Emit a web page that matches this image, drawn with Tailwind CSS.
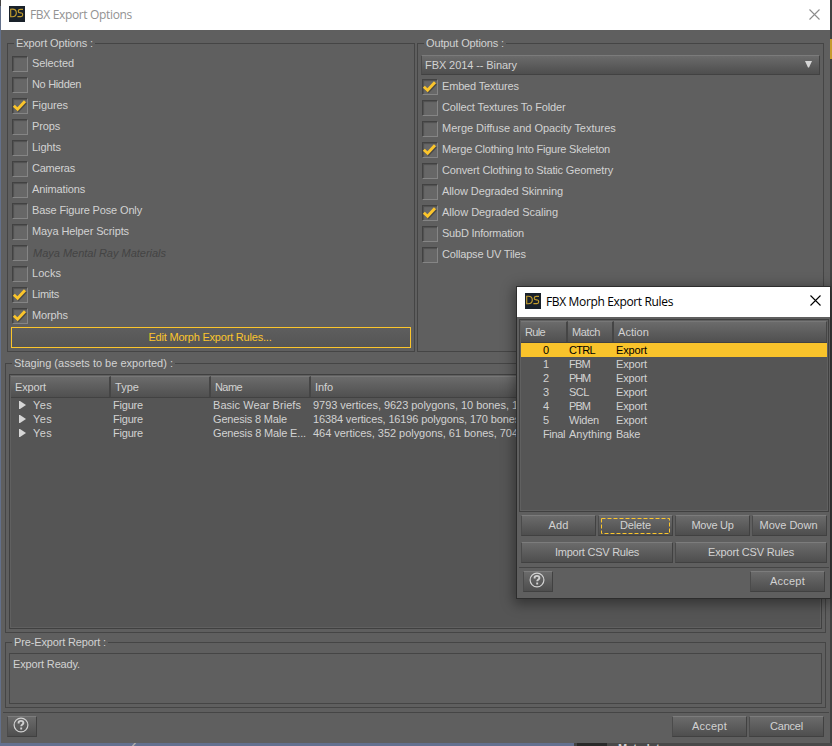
<!DOCTYPE html>
<html lang="en">
<head>
<meta charset="utf-8">
<title>FBX Export Options</title>
<script src="https://cdn.jsdelivr.net/npm/@tailwindcss/browser@4"></script>
</head>
<body class="relative h-[746px] w-[832px] overflow-hidden bg-[#414141] font-['Liberation_Sans',Arial,sans-serif] text-[11px] leading-[14px] text-[#d2d2d2]">
<svg width="0" height="0" class="absolute">
  <defs>
    <symbol id="check" viewBox="0 0 16 16"><path d="M3 9l3.6 3.4L14 4.6" fill="none" stroke="#333" stroke-opacity=".6" stroke-width="2.6"/><path d="M1.8 7.8l3.8 3.5L13 3.2" fill="none" stroke="#fbc52c" stroke-width="2.9"/></symbol>
    <symbol id="help" viewBox="0 0 16 16"><circle cx="8" cy="8" r="6.9" fill="none" stroke="#d2d2d2" stroke-width="1.2"/><path d="M5.6 6.5V5.8c0-1.2 1-1.9 2.4-1.9s2.4.8 2.4 2c0 1.5-2.2 1.6-2.2 3.3M8.2 10.6v1.8" fill="none" stroke="#d2d2d2" stroke-width="1.9"/></symbol>
    <symbol id="logo" viewBox="0 0 16 16"><rect width="16" height="16" fill="#19212a"/><path d="M1.7 3.2v7.5h1.6c2.6 0 4-1.5 4-3.7s-1.4-3.8-4-3.8zM14 3.3h-2.6c-2.8 0-2.8 3.2-.5 3.5h1c2.5.2 2.4 3.8 0 3.8H8.4" fill="none" stroke="#c29d2e" stroke-width="1.15"/></symbol>
    <symbol id="close" viewBox="0 0 11 11"><path d="M.5.5l10 10M10.5.5l-10 10" fill="none" stroke="currentColor" stroke-width="1.1"/></symbol>
  </defs>
</svg>

<!-- Desktop edges behind the window -->
<div class="absolute left-0 top-0 h-[746px] w-px bg-[#63708a]"></div>
<div class="absolute left-0 top-0 h-[6px] w-px bg-[#444]"></div>
<div class="absolute left-[830px] top-[39px] h-5 w-[2px] bg-[#c69a2e]"></div>
<div class="absolute left-0 top-[743px] flex h-[3px] w-[832px]">
  <div class="relative w-[574px] overflow-hidden bg-[#63708f]"><div class="absolute left-[133px] top-0 h-[3px] w-[2px] skew-x-[-40deg] bg-[#aaa]"></div></div>
  <div class="w-[3px] bg-[#444]"></div><div class="w-[30px] bg-[#2a2a2a]"></div>
  <div class="h-[3px] grow overflow-hidden bg-[#494949] pl-[11px] text-[11px] font-bold leading-[11px]">Metadata</div>
</div>

<main class="absolute left-px top-0 flex h-[743px] w-[829px] flex-col bg-[#5f5f5f]">
  <header class="flex h-[30px] shrink-0 items-center bg-white pl-2 pr-[10px] font-['Open_Sans',sans-serif] text-[12px] text-[#929292]">
    <svg class="mr-[5px] mb-[2px] h-4 w-4"><use href="#logo"/></svg>
    <h1 class="grow" data-w="102" data-font="12px 'Open Sans'">FBX Export Options</h1>
    <svg class="mb-px h-[11px] w-[11px] text-[#8c8c8c]"><use href="#close"/></svg>
  </header>

  <div class="flex gap-[2px] pl-[6px] pt-[13px]">
    <section class="relative h-[309px] w-[408px] border border-[#454545] px-[3px] pt-[9px]">
      <h2 class="absolute left-[6px] top-[-8px] bg-[#5f5f5f] px-[2px]" data-w="77">Export Options :</h2>
      <div id="exportList"></div>
      <button class="mt-[1px] block h-[21px] w-[400px] border border-[#fbc52c] bg-linear-to-b from-[#5e5e5e] to-[#555] pb-[2px] pr-[2px] text-[#fbc52c]"><span data-w="123">Edit Morph Export Rules...</span></button>
    </section>
    <section class="relative h-[309px] w-[407px] border border-[#454545] pl-[3px] pt-[11px]">
      <h2 class="absolute left-[6px] top-[-8px] bg-[#5f5f5f] px-[2px]" data-w="78">Output Options :</h2>
      <div class="mb-px flex h-5 w-[399px] items-center justify-between border border-[#424242] border-t-[#7b7b7b] border-l-[#4a4a4a] bg-linear-to-b from-[#6b6b6b] to-[#4e4e4e] pb-px pl-[3px] pr-[7px]">
        <span data-w="92">FBX 2014 -- Binary</span>
        <svg class="h-[7px] w-[7px]" viewBox="0 0 7 7"><path d="M0 0h7L4 6.5H3z" fill="#d6d6d6"/></svg>
      </div>
      <div id="outputList"></div>
    </section>
  </div>

  <section class="relative ml-1 mt-[11px] h-[270px] w-[821px] shrink-0 border border-[#454545] px-[3px] pt-[10px]">
    <h2 class="absolute left-[6px] top-[-8px] bg-[#5f5f5f] px-[2px]" data-w="159">Staging (assets to be exported) :</h2>
    <div class="h-[255px] border border-[#404040] p-px">
      <div class="h-full bg-[#555] outline outline-[#606060]">
        <div class="flex h-[22px]">
          <div class="w-[100px] border-b border-r-2 border-t border-b-[#424242] border-r-[#454545] border-t-[#777] bg-linear-to-b from-[#6b6b6b] to-[#505050] pl-1 leading-5"><span data-w="31">Export</span></div>
          <div class="w-[100px] border-b border-r-2 border-t border-b-[#424242] border-r-[#454545] border-t-[#777] bg-linear-to-b from-[#6b6b6b] to-[#505050] pl-1 leading-5"><span data-w="24">Type</span></div>
          <div class="w-[100px] border-b border-r-2 border-t border-b-[#424242] border-r-[#454545] border-t-[#777] bg-linear-to-b from-[#6b6b6b] to-[#505050] pl-1 leading-5"><span data-w="27">Name</span></div>
          <div class="grow border-b border-r-2 border-t border-b-[#424242] border-r-[#454545] border-t-[#777] bg-linear-to-b from-[#6b6b6b] to-[#505050] pl-1 leading-5"><span data-w="18">Info</span></div>
        </div>
        <div id="assets"></div>
      </div>
    </div>
  </section>

  <section class="relative ml-1 mt-[9px] h-[66px] w-[821px] shrink-0 border border-[#454545] px-[3px] pt-[10px]">
    <h2 class="absolute left-[6px] top-[-8px] bg-[#5f5f5f] px-[2px]" data-w="92">Pre-Export Report :</h2>
    <div class="h-[51px] border border-[#454545] pl-[3px] pt-[3px]"><span data-w="67">Export Ready.</span></div>
  </section>

  <div class="ml-[2px] mt-1 h-px w-[826px] shrink-0 bg-[#454545]"></div>
  <footer class="mt-[3px] flex h-[21px] gap-[2px] pl-[6px] pr-[6px]">
    <button class="mr-auto flex w-[30px] items-center justify-center border border-[#414141] border-l-[#4b4b4b] border-t-[#7c7c7c] bg-linear-to-b from-[#6b6b6b] to-[#4e4e4e]"><svg class="mb-[3px] mr-[2px] h-4 w-4"><use href="#help"/></svg></button>
    <button class="w-[75px] border border-[#414141] border-l-[#4b4b4b] border-t-[#7c7c7c] bg-linear-to-b from-[#6b6b6b] to-[#4e4e4e] pb-[2px]"><span data-w="35">Accept</span></button>
    <button class="w-[75px] border border-[#414141] border-l-[#4b4b4b] border-t-[#7c7c7c] bg-linear-to-b from-[#6b6b6b] to-[#4e4e4e] pb-[2px]"><span data-w="33">Cancel</span></button>
  </footer>
</main>

<!-- Floating dialog -->
<div class="absolute left-[516px] top-[286px] flex h-[313px] w-[315px] flex-col border border-[#2d2d2d] bg-[#5f5f5f] shadow-[0_3px_12px_2px_rgba(0,0,0,0.4)]">
  <header class="flex h-[30px] shrink-0 items-center bg-white pl-2 pr-[9px] font-['Open_Sans',sans-serif] text-[12px] text-black">
    <svg class="mr-[5px] mb-[2px] h-4 w-4"><use href="#logo"/></svg>
    <h1 class="grow" data-w="127" data-font="12px 'Open Sans'">FBX Morph Export Rules</h1>
    <svg class="mb-[3px] h-[11px] w-[11px]"><use href="#close"/></svg>
  </header>
  <div class="ml-[2px] mt-[2px] h-[193px] w-[310px] shrink-0 border border-[#404040] p-px">
    <div class="h-full bg-[#555] outline outline-[#606060]">
      <div class="flex h-[22px]">
        <div class="w-[47px] border-b border-r-2 border-t border-b-[#424242] border-r-[#454545] border-t-[#777] bg-linear-to-b from-[#6b6b6b] to-[#505050] pl-1 leading-5"><span data-w="20">Rule</span></div>
        <div class="w-[46px] border-b border-r-2 border-t border-b-[#424242] border-r-[#454545] border-t-[#777] bg-linear-to-b from-[#6b6b6b] to-[#505050] pl-1 leading-5"><span data-w="28">Match</span></div>
        <div class="grow border-b border-r border-t border-b-[#424242] border-r-[#454545] border-t-[#777] bg-linear-to-b from-[#6b6b6b] to-[#505050] pl-1 leading-5"><span data-w="31">Action</span></div>
      </div>
      <div id="rules"></div>
    </div>
  </div>
  <div class="mt-[3px] flex h-[21px] shrink-0 gap-[2px] pl-1">
    <button class="w-[75px] border border-[#414141] border-l-[#4b4b4b] border-t-[#7c7c7c] bg-linear-to-b from-[#6b6b6b] to-[#4e4e4e] pb-[2px]"><span data-w="20">Add</span></button>
    <button class="relative w-[75px] border border-[#414141] border-l-[#4b4b4b] border-t-[#7c7c7c] bg-linear-to-b from-[#6b6b6b] to-[#4e4e4e] pb-[2px]"><span data-w="31">Delete</span>
      <svg class="absolute left-[2px] top-[2px] h-4 w-[69px]"><rect x=".5" y=".5" width="68" height="15" fill="none" stroke="#fbc52c" stroke-dasharray="4 2"/></svg></button>
    <button class="w-[75px] border border-[#414141] border-l-[#4b4b4b] border-t-[#7c7c7c] bg-linear-to-b from-[#6b6b6b] to-[#4e4e4e] pb-[2px]"><span data-w="42">Move Up</span></button>
    <button class="w-[75px] border border-[#414141] border-l-[#4b4b4b] border-t-[#7c7c7c] bg-linear-to-b from-[#6b6b6b] to-[#4e4e4e] pb-[2px] pr-[2px]"><span data-w="58">Move Down</span></button>
  </div>
  <div class="mt-[6px] flex h-[21px] shrink-0 gap-[2px] pl-1">
    <button class="w-[152px] border border-[#414141] border-l-[#4b4b4b] border-t-[#7c7c7c] bg-linear-to-b from-[#6b6b6b] to-[#4e4e4e] pb-[2px]"><span data-w="84">Import CSV Rules</span></button>
    <button class="w-[152px] border border-[#414141] border-l-[#4b4b4b] border-t-[#7c7c7c] bg-linear-to-b from-[#6b6b6b] to-[#4e4e4e] pb-[2px]"><span data-w="86">Export CSV Rules</span></button>
  </div>
  <div class="ml-[2px] mt-1 h-px w-[310px] shrink-0 bg-[#454545]"></div>
  <footer class="mt-[3px] flex h-[21px] justify-between pl-[6px] pr-[5px]">
    <button class="flex w-[30px] items-center justify-center border border-[#414141] border-l-[#4b4b4b] border-t-[#7c7c7c] bg-linear-to-b from-[#6b6b6b] to-[#4e4e4e]"><svg class="mb-[3px] mr-[2px] h-4 w-4"><use href="#help"/></svg></button>
    <button class="w-[75px] border border-[#414141] border-l-[#4b4b4b] border-t-[#7c7c7c] bg-linear-to-b from-[#6b6b6b] to-[#4e4e4e] pb-[2px]"><span data-w="35">Accept</span></button>
  </footer>
</div>

<script>
const box = (on) => `<span class="mt-[3px] h-4 w-4 shrink-0 self-start border border-[#424242] border-b-[#858585] border-r-[#858585] bg-[#676767] shadow-[inset_1px_1px_1px_#505050]">${on ? '<svg class="-ml-px -mt-px h-4 w-4"><use href="#check"/></svg>' : ''}</span>`;
const option = ([label, w, on, off]) => `<label class="flex h-[21px] items-center gap-1 pl-px">${box(on)}<span class="mb-px ${off ? 'italic text-[#444] pl-px pt-[2px]' : ''}"><span data-w="${w}">${label}</span></span></label>`;
exportList.innerHTML = [['Selected',42],['No Hidden',49],['Figures',36,1],['Props',28],['Lights',29],['Cameras',43],['Animations',53],['Base Figure Pose Only',110],['Maya Helper Scripts',97],['Maya Mental Ray Materials',133,0,1],['Locks',29],['Limits',27,1],['Morphs',36,1]].map(option).join('');
outputList.innerHTML = [['Embed Textures',77,1],['Collect Textures To Folder',124],['Merge Diffuse and Opacity Textures',174],['Merge Clothing Into Figure Skeleton',168,1],['Convert Clothing to Static Geometry',171],['Allow Degraded Skinning',121],['Allow Degraded Scaling',116,1],['SubD Information',82],['Collapse UV Tiles',84]].map(option).join('');
assets.innerHTML = [['Basic Wear Briefs',88,'9793 vertices, 9623 polygons, 10 bones, 1',205],['Genesis 8 Male',74,'16384 vertices, 16196 polygons, 170 bones',207],['Genesis 8 Male E...',93,'464 vertices, 352 polygons, 61 bones, 704',205]].map(([n,nw,i,iw]) => `<div class="flex h-[14px]"><span class="flex w-[102px] items-center pl-2"><svg class="mr-[7px] h-2 w-[7px]" viewBox="0 0 7 8"><path d="M0 0h1l6 4-6 4H0z" fill="#d6d6d6"/></svg><span data-w="19">Yes</span></span><span class="w-[100px]"><span data-w="30">Figure</span></span><span class="w-[100px]"><span data-w="${nw}">${n}</span></span><span><span data-w="${iw}">${i}</span></span></div>`).join('');
rules.innerHTML = [['0',6,'CTRL',26,'Export',31],['1',6,'FBM',21,'Export',31],['2',6,'PHM',21,'Export',31],['3',6,'SCL',20,'Export',31],['4',6,'PBM',21,'Export',31],['5',6,'Widen',30,'Export',31],['Final',22,'Anything',43,'Bake',24]].map(([a,aw,b,bw,c,cw],i) => `<div class="flex h-[14px] pl-[22px] ${i ? '' : 'bg-[#f9c32b] text-black'}"><span class="w-[26px]"><span data-w="${aw}">${a}</span></span><span class="w-[47px]"><span data-w="${bw}">${b}</span></span><span><span data-w="${cw}">${c}</span></span></div>`).join('');
// Letter-space each label to its design width
const pen = document.createElement('canvas').getContext('2d');
document.querySelectorAll('[data-w]').forEach(el => {
  pen.font = el.dataset.font || "11px 'Liberation Sans'";
  el.style.whiteSpace = 'nowrap';
  el.style.letterSpacing = ((+el.dataset.w - pen.measureText(el.textContent).width) / el.textContent.length) + 'px';
});
</script>
</body>
</html>
